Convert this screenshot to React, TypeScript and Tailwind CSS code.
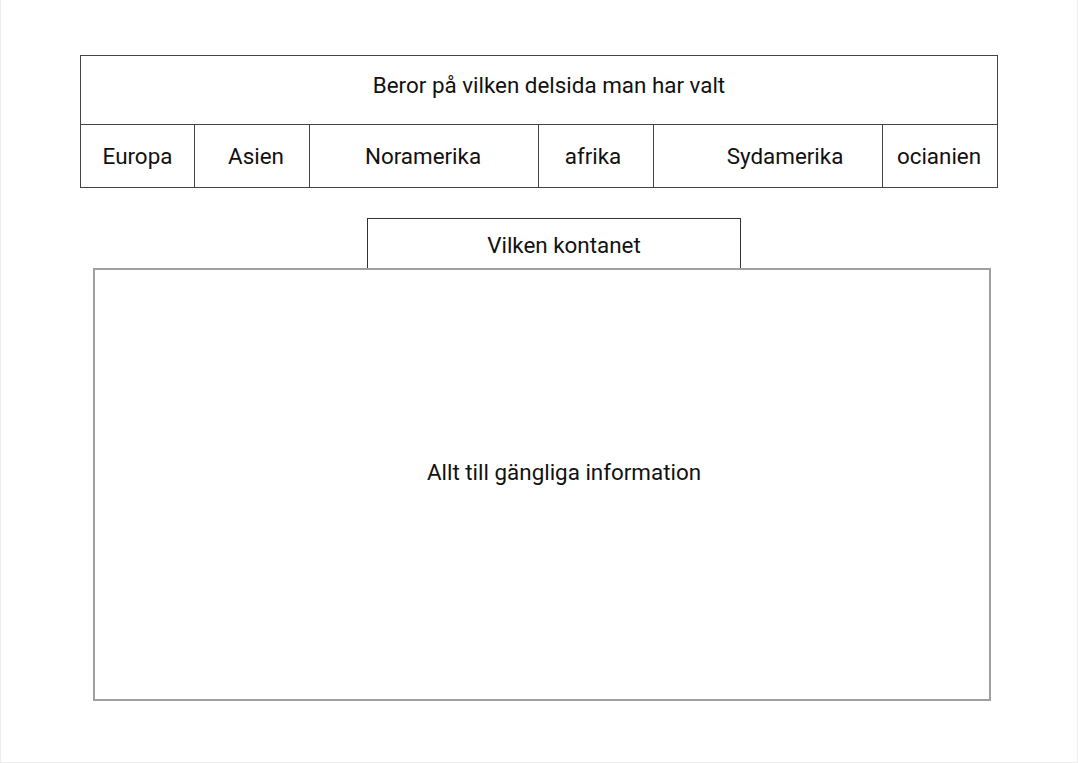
const tabs = [
  { name: "Europa", w: "w-[114px]", pad: "" },
  { name: "Asien", w: "w-[115px]", pad: "pl-[8px]" },
  { name: "Noramerika", w: "w-[229px]", pad: "pr-[2px]" },
  { name: "afrika", w: "w-[115px]", pad: "pr-[6px]" },
  { name: "Sydamerika", w: "w-[229px]", pad: "pl-[34px]" },
  { name: "ocianien", w: "w-[114px]", pad: "pr-[2px]" },
];

export default function App() {
  return (
    <div
      className="w-[1078px] h-[763px] bg-white border-x border-b border-[#ececec] text-[22.4px] text-[#111]"
      style={{ fontFamily: "Roboto, 'Liberation Sans', sans-serif" }}
    >
      {/* Top navigation box */}
      <div className="ml-[79px] pt-[55px]">
        <div className="w-[918px] border border-[#444]">
          <div className="h-[69px] border-b border-[#444] flex items-center justify-center pl-[20px] pb-[8px]">
            Beror på vilken delsida man har valt
          </div>
          <div className="flex h-[62px]">
            {tabs.map((t, i) => (
              <div
                key={t.name}
                className={`${t.w} ${t.pad} flex items-center justify-center pt-[2px] ${
                  i < tabs.length - 1 ? "border-r border-[#444]" : ""
                }`}
              >
                {t.name}
              </div>
            ))}
          </div>
        </div>
      </div>

      {/* Content area */}
      <div className="mt-[30px]">
        <div className="ml-[366px] w-[374px] h-[50px] border-t border-x border-[#333] flex items-center justify-center pl-[20px] pt-[4px]">
          Vilken kontanet
        </div>
        <div className="ml-[92px] w-[898px] h-[433px] border-2 border-[#a0a0a0] flex items-center justify-center pl-[44px] pb-[24px]">
          Allt till gängliga information
        </div>
      </div>
    </div>
  );
}
